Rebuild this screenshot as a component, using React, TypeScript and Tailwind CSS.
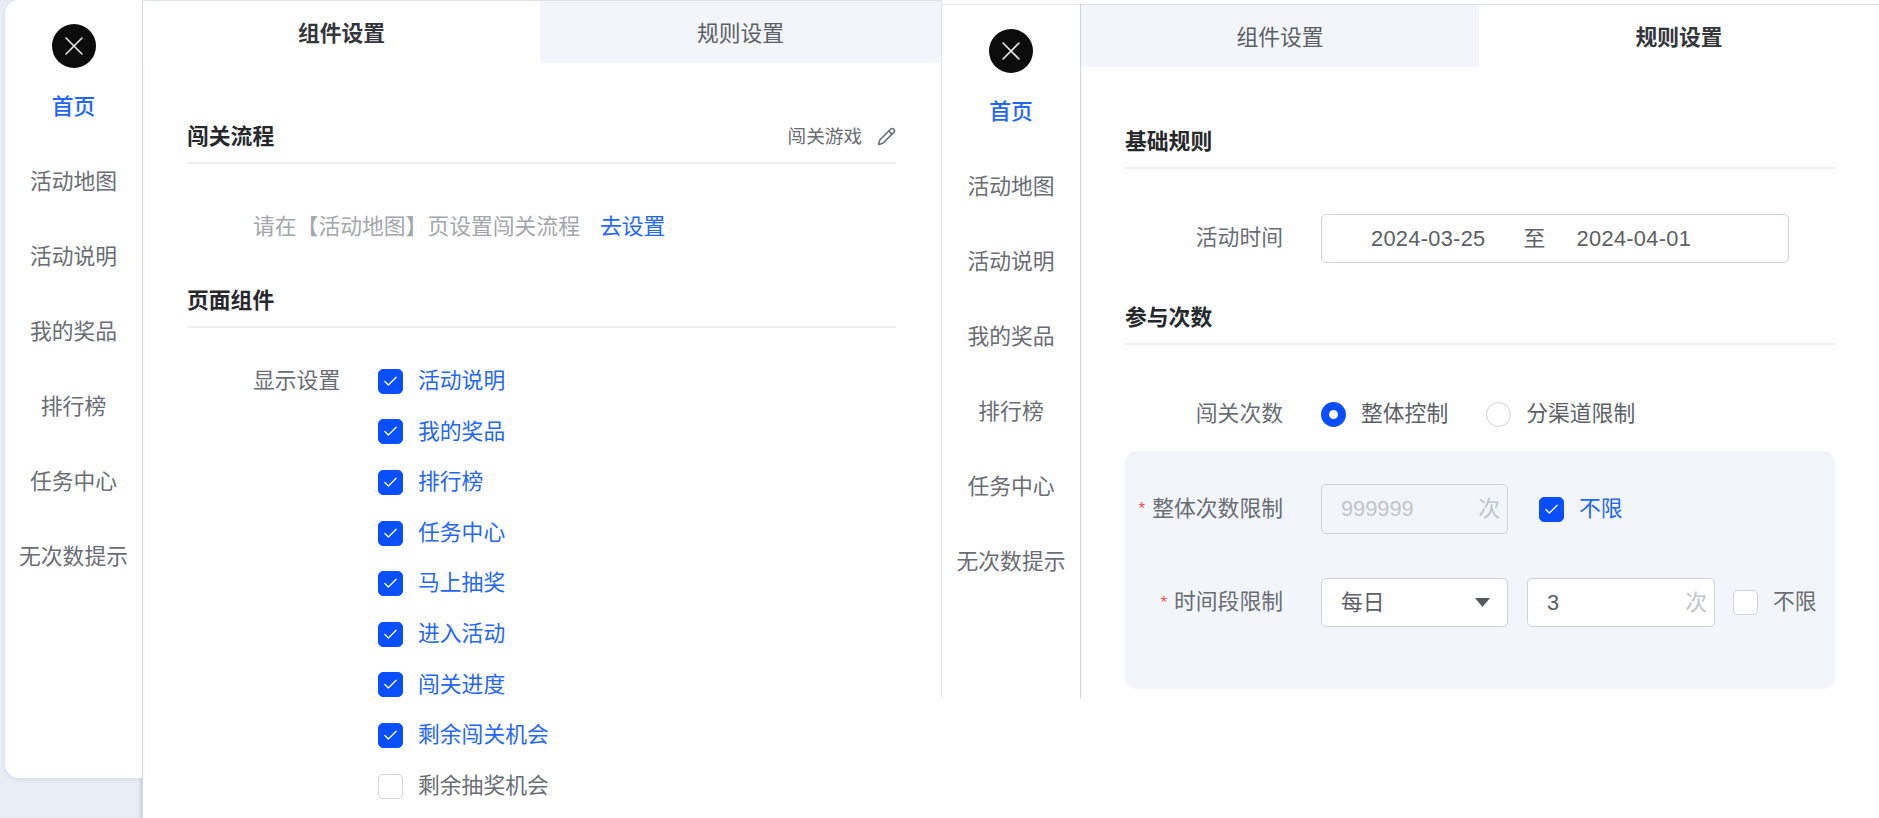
import { Check, Pencil, X } from "lucide-react";
import type { ReactNode } from "react";

const NAV = ["首页", "活动地图", "活动说明", "我的奖品", "排行榜", "任务中心", "无次数提示"];
const ITEMS: [string, boolean][] = [
  ["我的奖品", true],
  ["排行榜", true],
  ["任务中心", true],
  ["马上抽奖", true],
  ["进入活动", true],
  ["闯关进度", true],
  ["剩余闯关机会", true],
  ["剩余抽奖机会", false],
];

function Sidebar() {
  return (
    <nav className="flex w-full flex-col items-center">
      <button className="flex h-11 w-11 items-center justify-center rounded-full bg-[#0c0c0c] text-[#e8e8e8]">
        <X size={32} strokeWidth={1.2} />
      </button>
      {NAV.map((n, i) => (
        <div
          key={n}
          className={`flex h-[75px] shrink-0 items-center justify-center whitespace-nowrap pt-[3px] ${
            i === 0 ? "font-medium text-[#1f66ff]" : "text-[#6a6d73]"
          }`}
        >
          {n}
        </div>
      ))}
    </nav>
  );
}

function Tabs({ active, firstWidth }: { active: 0 | 1; firstWidth: string }) {
  return (
    <div className="flex h-[62px] shrink-0">
      {["组件设置", "规则设置"].map((t, i) => (
        <div
          key={t}
          className={`flex items-center justify-center pt-1 ${i === 0 ? firstWidth : "flex-1"} ${
            i === active ? "bg-white font-semibold text-[#33363b]" : "bg-[#f2f5fa] text-[#5c5f65]"
          }`}
        >
          {t}
        </div>
      ))}
    </div>
  );
}

function Heading({ title, right, className }: { title: string; right?: ReactNode; className: string }) {
  return (
    <div className={`flex h-[55px] items-center justify-between border-b-2 border-[#eef0f3] pt-[3px] ${className}`}>
      <span className="font-semibold text-[#26282c]">{title}</span>
      {right}
    </div>
  );
}

function Box({ checked, label, className = "" }: { checked: boolean; label: string; className?: string }) {
  return (
    <div className={`flex items-center gap-[15px] ${className}`}>
      <span
        className={`flex h-[25px] w-[25px] shrink-0 items-center justify-center rounded-[5px] border ${
          checked ? "border-[#0a4fff] bg-[#0a4fff] text-white" : "border-[#cdd3da] bg-white"
        }`}
      >
        {checked && <Check size={17} strokeWidth={1.8} />}
      </span>
      <span className={`whitespace-nowrap ${checked ? "text-[#1f66ff]" : "text-[#6a6d73]"}`}>{label}</span>
    </div>
  );
}

function Radio({ on, label }: { on: boolean; label: string }) {
  return (
    <div className="flex items-center gap-[15px]">
      <span
        className={`h-[25px] w-[25px] rounded-full bg-white ${
          on ? "border-[8px] border-[#0a4fff]" : "border border-[#cdd3da]"
        }`}
      />
      <span className="whitespace-nowrap text-[#5c5f65]">{label}</span>
    </div>
  );
}

function Unit() {
  return <span className="ml-auto text-[#c0c5cc]">次</span>;
}

function FormLabel({ children, star }: { children: string; star?: boolean }) {
  return (
    <div className="flex w-[158px] shrink-0 items-center justify-end whitespace-nowrap text-[#6a6d73]">
      {star && <span className="mr-[7px] text-[17px] text-[#f5554a]">*</span>}
      {children}
    </div>
  );
}

function LeftPane() {
  return (
    <div className="flex h-[818px] w-[941px] shrink-0">
      <div className="w-[142px] shrink-0 bg-[#e9edf5] pl-[5px] shadow-[inset_-3px_0_3px_-1px_rgba(120,130,150,0.25)]">
        <div className="h-[778px] rounded-l-[14px] bg-white pt-6 shadow-[0_1px_4px_rgba(120,130,150,0.18)]">
          <Sidebar />
        </div>
      </div>
      <main className="flex-1 border-l border-t border-[#d5d9e2] border-t-[#dfe3ea]">
        <Tabs active={0} firstWidth="w-[397px]" />
        <div className="ml-[44px] mr-[45px]">
          <Heading
            title="闯关流程"
            className="mt-[46px]"
            right={
              <span className="flex items-center gap-[15px] text-[18.6px] text-[#6a6d73]">
                闯关游戏
                <Pencil size={19} strokeWidth={2} />
              </span>
            }
          />
          <div className="mt-[47px] flex h-8 items-center pl-[66px] text-[#a3a6ab]">
            请在【活动地图】页设置闯关流程
            <span className="ml-5 text-[#1f66ff]">去设置</span>
          </div>
          <Heading title="页面组件" className="mt-[30px]" />
          <div className="mt-[28px] flex pl-[66px]">
            <div className="flex h-[50.6px] w-[125px] items-center text-[#6a6d73]">显示设置</div>
            <div className="flex flex-col">
              <Box checked label="活动说明" className="h-[50.6px]" />
              {ITEMS.map(([t, c]) => (
                <Box key={t} checked={c} label={t} className="h-[50.6px]" />
              ))}
            </div>
          </div>
        </div>
      </main>
    </div>
  );
}

function RightPane() {
  return (
    <div className="flex h-[698px] flex-1 border-l border-[#e3e6ee] pt-[4px]">
      <div className="w-[138px] shrink-0 border-t border-[#e4e7ed] pt-6">
        <Sidebar />
      </div>
      <main className="flex-1 border-l border-t border-[#d9dde6] border-l-[#cfd4de]">
        <Tabs active={1} firstWidth="w-[398px]" />
        <div className="ml-[44px] mr-[44px]">
          <Heading title="基础规则" className="mt-[47px]" />
          <div className="mt-[45px] flex h-[49px]">
            <FormLabel>活动时间</FormLabel>
            <div className="ml-[38px] flex w-[468px] items-center rounded-[5px] border border-[#ccd3db] pl-[49px] pt-[2px] tracking-[0.3px] text-[#5c5f65]">
              <span>2024-03-25</span>
              <span className="ml-[38px] mr-[31px]">至</span>
              <span>2024-04-01</span>
            </div>
          </div>
          <Heading title="参与次数" className="mt-[27px]" />
          <div className="mt-[53px] flex h-8">
            <FormLabel>闯关次数</FormLabel>
            <div className="ml-[38px] flex items-center gap-[38px]">
              <Radio on label="整体控制" />
              <Radio on={false} label="分渠道限制" />
            </div>
          </div>
          <div className="mt-[21px] rounded-[12px] bg-[#f2f5fa] pb-[62px] pt-[33px]">
            <div className="flex h-[50px]">
              <FormLabel star>整体次数限制</FormLabel>
              <div className="ml-[38px] flex w-[187px] items-center rounded-[5px] border border-[#ccd3db] px-[7px] pl-[19px] text-[#c0c5cc]">
                999999
                <Unit />
              </div>
              <Box checked label="不限" className="ml-[31px]" />
            </div>
            <div className="mt-[44px] flex h-[49px]">
              <FormLabel star>时间段限制</FormLabel>
              <div className="ml-[38px] flex w-[187px] items-center justify-between rounded-[5px] border border-[#ccd3db] bg-white pl-[19px] pr-[17px] pt-[2px] text-[#5c5f65]">
                每日
                <svg width="15" height="9" viewBox="0 0 15 9" className="-mt-[2px]">
                  <path d="M0 0h15L7.5 9z" fill="#55585d" />
                </svg>
              </div>
              <div className="ml-[19px] flex w-[188px] items-center rounded-[5px] border border-[#ccd3db] bg-white px-[7px] pl-[19px] pt-[2px] text-[#5c5f65]">
                3
                <Unit />
              </div>
              <Box checked={false} label="不限" className="ml-[18px]" />
            </div>
          </div>
        </div>
      </main>
    </div>
  );
}

export default function App() {
  return (
    <div className="flex h-[818px] w-[1879px] overflow-hidden bg-white font-['Liberation_Sans','Noto_Sans_CJK_SC',sans-serif] text-[21.8px]">
      <LeftPane />
      <RightPane />
    </div>
  );
}
